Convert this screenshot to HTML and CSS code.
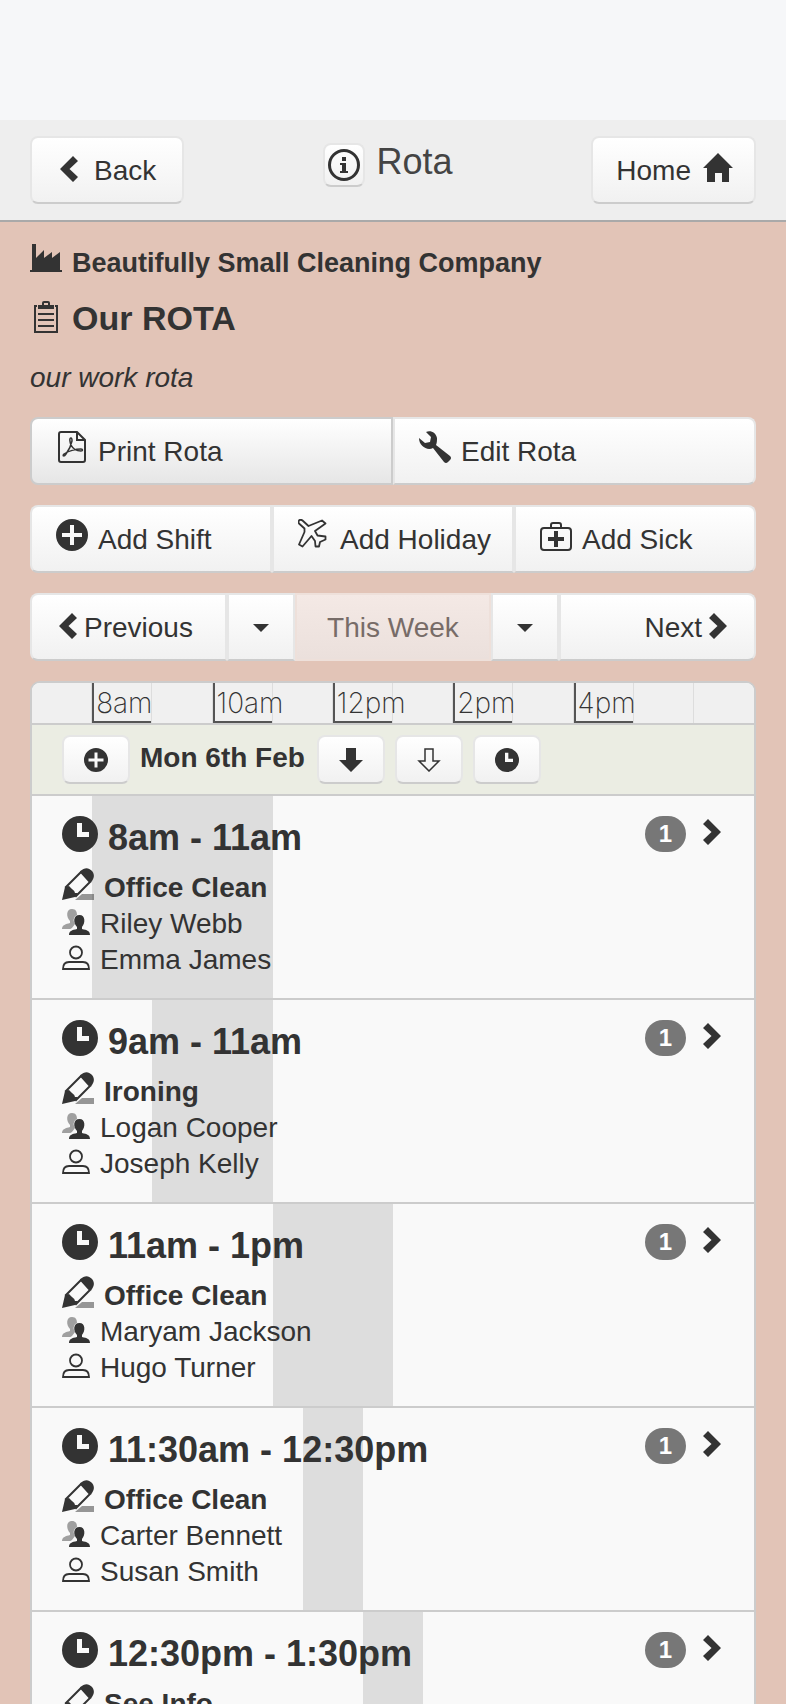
FILE: index.html
```html
<!DOCTYPE html>
<html lang="en">
<head>
<meta charset="utf-8">
<meta name="viewport" content="width=device-width, initial-scale=1">
<title>Rota</title>
<link rel="stylesheet" href="styles.css">
</head>
<body>
<svg class="sprite" aria-hidden="true">
  <symbol id="left" viewBox="0 0 18 26"><path d="M13 0l5 5-8.500 8 8.500 8-5 5L0 13z"/></symbol>
  <symbol id="right" viewBox="0 0 18 26"><path d="M5 0L0 5l8.500 8L0 21l5 5 13-13z"/></symbol>
  <symbol id="info" viewBox="0 0 32 32"><circle cx="16" cy="16" r="14.500" fill="none" stroke="currentColor" stroke-width="3"/><path d="M14 8h4v4h-4zM12 14h6v8h2v2h-8v-2h2v-6h-2z"/></symbol>
  <symbol id="home" viewBox="0 0 30 30"><path d="M15 0l15 15h-4v14h-7v-9h-7v9H4V15H0z"/></symbol>
  <symbol id="factory" viewBox="0 0 32 28"><path d="M2 0h4v14l8-8v8l8-6v6l8-6v18h2v2H0v-2h2z"/></symbol>
  <symbol id="clipboard" viewBox="0 0 32 32"><path d="M5 5v26h22V5M4 5h3M25 5h3" fill="none" stroke="currentColor" stroke-width="2"/><path d="M8 4h4V2q0-2 2-2h4q2 0 2 2v2h4v4H8zM14 2v2h4V2zM8 12h16v2H8zM8 18h16v2H8zM8 24h16v2H8z" fill-rule="evenodd"/></symbol>
  <symbol id="pdf" viewBox="0 0 32 32"><g fill="none" stroke="currentColor" stroke-width="2"><path d="M5 1h16l8 8v20q0 2-2 2H5q-2 0-2-2V3q0-2 2-2M21 1v8h8"/><path d="M15 7c-2 0-1 4 0 7 2 4 6 6 10 6 2 0 2-2 0-2-5 0-13 2-17 5-2 2 0 3 2 0 3-4 5-8 6-13 0-2 0-3-1-3z" stroke-width="1.500"/></g></symbol>
  <symbol id="wrench" viewBox="0 0 32 32"><path d="M7 1c5-2 10 1 11 6 0 2 0 5-1 7l14 11q2 2 0 4l-2 2q-2 2-4 0L14 17c-6 3-14-2-14-10l6 5 5-1 1-5z"/></symbol>
  <symbol id="plus" viewBox="0 0 32 32"><path d="M16 0a16 16 0 1 0 0 32 16 16 0 0 0 0-32zM14 6h4v8h8v4h-8v8h-4v-8H6v-4h8z" fill-rule="evenodd"/></symbol>
  <symbol id="plane" viewBox="0 0 32 32"><path d="M1 1.500Q2.500 0 4.500 1.500l6 5.500L24 1.500l3.500 3L17 12l2.500 4.500 8 1v3L22 23l-1 4.500h-3.500L17 22l-3.500-5-9 10.500-3.500-2 5.500-12.500V9.500L1 4.500Q0 3 1 1.500z" fill="none" stroke="currentColor" stroke-width="1.800" stroke-linejoin="round"/></symbol>
  <symbol id="medkit" viewBox="0 0 32 32"><rect x="1" y="9" width="30" height="22" rx="3" fill="none" stroke="currentColor" stroke-width="2"/><path d="M11 9V6q0-2 2-2h6q2 0 2 2v3" fill="none" stroke="currentColor" stroke-width="2"/><path d="M14 12h4v6h6v4h-6v6h-4v-6H8v-4h6z"/></symbol>
  <symbol id="caret" viewBox="0 0 16 8"><path d="M0 0h16L8 8z"/></symbol>
  <symbol id="down" viewBox="0 0 24 24"><path d="M7 0h10v12h7L12 24 0 12h7z"/></symbol>
  <symbol id="down-open" viewBox="0 0 24 24"><path d="M8 1h8v12h6L12 23 2 13h6z" fill="none" stroke="currentColor" stroke-width="1.500"/></symbol>
  <symbol id="clock" viewBox="0 0 36 36"><path d="M18 0a18 18 0 1 0 0 36 18 18 0 0 0 0-36zM15 7h5v9h7v5H15z" fill-rule="evenodd"/></symbol>
  <symbol id="pen" viewBox="0 0 32 32"><path d="M20 26h12v6H13z" opacity=".5"/><path d="M4 19L19 4l9 10-14 14z" fill="#f9f9f9" stroke="currentColor" stroke-width="2"/><path d="M18 3.500C23-1.500 27 0 29.500 2.500S33.500 9 29 14.500L27 13 20 5.500zM0 32l3-13 4-1 3 3q3 2 3 4h3l-3 4z"/></symbol>
  <symbol id="users" viewBox="0 0 28 28"><path d="M10 1c4 0 5 3 5 6-4 2-4 6-2 9-2 3-4 5-5 5H0c0-4 4-5 8-6V13C4 9 4 1 10 1z" opacity=".45"/><path d="M17.500 7c6 0 6 8 2.500 12v2c5 1 8 2 8 6H7c0-4 3-5 8-6v-2c-4-4-4-12 2.500-12z"/></symbol>
  <symbol id="user" viewBox="0 0 28 28"><g fill="none" stroke="currentColor" stroke-width="1.800"><circle cx="14" cy="8.500" r="6"/><path d="M1 25c0-5 2-7 6-7h14c4 0 6 2 6 7z"/></g></symbol>
</svg>

<div class="app">
  <header class="topbar">
    <a class="btn btn-nav btn-back" href="#back"><svg class="chevron"><use href="#left"/></svg>Back</a>
    <div class="heading">
      <button class="btn btn-info" type="button" aria-label="Information"><svg class="icon-md"><use href="#info"/></svg></button>
      <h1>Rota</h1>
    </div>
    <a class="btn btn-nav btn-home" href="#home">Home<svg class="icon-home"><use href="#home"/></svg></a>
  </header>

  <main class="content">
    <h2 class="company"><svg class="icon-factory"><use href="#factory"/></svg>Beautifully Small Cleaning Company</h2>
    <h2 class="rota-name"><svg class="icon-md"><use href="#clipboard"/></svg>Our ROTA</h2>
    <p class="description">our work rota</p>

    <div class="group">
      <button class="btn btn-action pressed" type="button"><svg class="icon-md"><use href="#pdf"/></svg>Print Rota</button>
      <button class="btn btn-action" type="button"><svg class="icon-md"><use href="#wrench"/></svg>Edit Rota</button>
    </div>
    <div class="group">
      <button class="btn btn-action" type="button"><svg class="icon-md"><use href="#plus"/></svg>Add Shift</button>
      <button class="btn btn-action" type="button"><svg class="icon-md"><use href="#plane"/></svg>Add Holiday</button>
      <button class="btn btn-action" type="button"><svg class="icon-md"><use href="#medkit"/></svg>Add Sick</button>
    </div>
    <div class="group group-weeks">
      <button class="btn btn-prev" type="button"><svg class="chevron"><use href="#left"/></svg>Previous</button>
      <button class="btn" type="button" aria-label="Earlier weeks"><svg class="caret"><use href="#caret"/></svg></button>
      <button class="btn btn-week" type="button" disabled>This Week</button>
      <button class="btn" type="button" aria-label="Later weeks"><svg class="caret"><use href="#caret"/></svg></button>
      <button class="btn btn-next" type="button">Next<svg class="chevron"><use href="#right"/></svg></button>
    </div>

    <section class="schedule">
      <div class="hours">
        <span></span><span class="mark">8am</span><span></span><span class="mark">10am</span><span></span><span class="mark">12pm</span><span></span><span class="mark">2pm</span><span></span><span class="mark">4pm</span><span></span><span></span>
      </div>
      <div class="day">
        <button class="btn btn-small" type="button" aria-label="Add shift on Monday"><svg class="icon-sm"><use href="#plus"/></svg></button>
        <h3>Mon 6th Feb</h3>
        <button class="btn btn-small" type="button" aria-label="Copy down"><svg class="icon-sm"><use href="#down"/></svg></button>
        <button class="btn btn-small" type="button" aria-label="Move down"><svg class="icon-sm"><use href="#down-open"/></svg></button>
        <button class="btn btn-small" type="button" aria-label="Times"><svg class="icon-sm"><use href="#clock"/></svg></button>
      </div>

      <a class="shift" href="#shift-1">
        <span class="span-bar" style="left:8.3333%;width:25%"></span>
        <span class="time"><svg class="icon-lg"><use href="#clock"/></svg><strong>8am - 11am</strong><span class="badge">1</span><svg class="chevron"><use href="#right"/></svg></span>
        <span class="task"><svg class="icon-md"><use href="#pen"/></svg>Office Clean</span>
        <span class="person"><svg class="icon-person"><use href="#users"/></svg>Riley Webb</span>
        <span class="person"><svg class="icon-person"><use href="#user"/></svg>Emma James</span>
      </a>
      <a class="shift" href="#shift-2">
        <span class="span-bar" style="left:16.6667%;width:16.6667%"></span>
        <span class="time"><svg class="icon-lg"><use href="#clock"/></svg><strong>9am - 11am</strong><span class="badge">1</span><svg class="chevron"><use href="#right"/></svg></span>
        <span class="task"><svg class="icon-md"><use href="#pen"/></svg>Ironing</span>
        <span class="person"><svg class="icon-person"><use href="#users"/></svg>Logan Cooper</span>
        <span class="person"><svg class="icon-person"><use href="#user"/></svg>Joseph Kelly</span>
      </a>
      <a class="shift" href="#shift-3">
        <span class="span-bar" style="left:33.3333%;width:16.6667%"></span>
        <span class="time"><svg class="icon-lg"><use href="#clock"/></svg><strong>11am - 1pm</strong><span class="badge">1</span><svg class="chevron"><use href="#right"/></svg></span>
        <span class="task"><svg class="icon-md"><use href="#pen"/></svg>Office Clean</span>
        <span class="person"><svg class="icon-person"><use href="#users"/></svg>Maryam Jackson</span>
        <span class="person"><svg class="icon-person"><use href="#user"/></svg>Hugo Turner</span>
      </a>
      <a class="shift" href="#shift-4">
        <span class="span-bar" style="left:37.5%;width:8.3333%"></span>
        <span class="time"><svg class="icon-lg"><use href="#clock"/></svg><strong>11:30am - 12:30pm</strong><span class="badge">1</span><svg class="chevron"><use href="#right"/></svg></span>
        <span class="task"><svg class="icon-md"><use href="#pen"/></svg>Office Clean</span>
        <span class="person"><svg class="icon-person"><use href="#users"/></svg>Carter Bennett</span>
        <span class="person"><svg class="icon-person"><use href="#user"/></svg>Susan Smith</span>
      </a>
      <a class="shift" href="#shift-5">
        <span class="span-bar" style="left:45.8333%;width:8.3333%"></span>
        <span class="time"><svg class="icon-lg"><use href="#clock"/></svg><strong>12:30pm - 1:30pm</strong><span class="badge">1</span><svg class="chevron"><use href="#right"/></svg></span>
        <span class="task"><svg class="icon-md"><use href="#pen"/></svg>See Info</span>
      </a>
    </section>
  </main>
</div>
</body>
</html>
```
FILE: styles.css
```css
* { box-sizing: border-box; }

body {
  margin: 0;
  font: 28px/36px "Liberation Sans", Arial, sans-serif;
  color: #333;
  background: #e2c4b7;
}

h1, h2, h3, p { margin: 0; }
a { color: inherit; text-decoration: none; }
svg { display: block; flex: none; fill: currentColor; }
.sprite { position: absolute; width: 0; height: 0; }

.app {
  height: 100vh;
  overflow: hidden;
  border-top: 120px solid #f6f7f9;
}

.icon-sm { width: 24px; height: 24px; }
.icon-md { width: 32px; height: 32px; }
.icon-lg { width: 36px; height: 36px; }
.icon-home { width: 30px; height: 30px; }
.icon-factory { width: 32px; height: 28px; }
.icon-person { width: 28px; height: 28px; }
.chevron { width: 18px; height: 26px; }
.caret { width: 16px; height: 8px; }

.btn {
  display: flex;
  align-items: center;
  justify-content: center;
  height: 68px;
  padding: 2px 0 0;
  border: 2px solid #e6e6e6;
  border-bottom-color: #ccc;
  border-radius: 8px;
  background: linear-gradient(#fff, #f1f1f1);
  color: #333;
  font: inherit;
  white-space: nowrap;
}
.btn .chevron { margin-bottom: 4px; }

/* Top bar */
.topbar {
  display: grid;
  grid-template-columns: 1fr auto 1fr;
  align-items: start;
  height: 102px;
  padding: 16px 30px;
  background: #eee;
  border-bottom: 2px solid #a9a9a9;
}
.btn-back { justify-self: start; gap: 16px; padding: 2px 26px 0 28px; }
.btn-home { justify-self: end; gap: 12px; padding: 2px 21px 0 23px; }
.btn-home svg { margin-bottom: 6px; }
.heading {
  display: flex;
  align-items: center;
  gap: 11px;
  padding-right: 10px;
}
.heading h1 {
  color: #444;
  font-size: 36px;
  font-weight: 400;
  line-height: 44px;
}
.btn-info { width: 42px; height: 44px; margin-top: 7px; padding: 0; }

/* Page content */
.content { padding: 21px 30px 0; }
.company, .rota-name {
  display: flex;
  align-items: center;
  gap: 10px;
  font-weight: 700;
  line-height: 40px;
}
.company { margin-bottom: 15px; font-size: 27px; }
.company svg { margin-bottom: 10px; }
.rota-name { margin-bottom: 20px; font-size: 34px; }
.rota-name svg { margin-bottom: 2px; }
.description { margin-bottom: 19px; font-style: italic; line-height: 40px; }

.group { display: grid; grid-auto-flow: column; grid-auto-columns: minmax(0, 1fr); margin-bottom: 20px; }
.group-weeks { grid-template-columns: minmax(0, 1fr) 68px minmax(0, 1fr) 68px minmax(0, 1fr); }
.group .btn { border-radius: 0; }
.group .btn:first-child { border-radius: 8px 0 0 8px; }
.group .btn:last-child { border-radius: 0 8px 8px 0; }
.group .btn-action { justify-content: flex-start; gap: 10px; padding-left: 24px; }
.btn-action svg { margin-bottom: 10px; }
.group .pressed { border-color: #ccc; background: linear-gradient(#fff, #e6e6e6); }
.group .btn-prev { justify-content: flex-start; gap: 7px; padding-left: 27px; }
.group .btn-next { justify-content: flex-end; gap: 7px; padding-right: 27px; }
.group .btn-week {
  border-color: #eee0da;
  background: linear-gradient(#f4e9e5, #ebe0dc);
  color: #776c68;
}

/* Schedule */
.schedule {
  border: 2px solid #ccc;
  border-radius: 10px 10px 0 0;
  background: #f9f9f9;
  overflow: hidden;
}
.hours { display: grid; grid-template-columns: repeat(12, minmax(0, 1fr)); height: 40px; background: #f0f0f0; }
.hours span {
  border-right: 1px solid #ddd;
  font-family: Inter, "Liberation Sans", sans-serif;
  font-weight: 200;
  line-height: 40px;
  white-space: nowrap;
}
.hours span:last-child { border-right: 0; }
.hours .mark {
  padding-left: 2px;
  border-left: 2px solid #555;
  background: linear-gradient(#555, #555) bottom / 100% 2px no-repeat;
}
.day {
  display: flex;
  align-items: center;
  gap: 10px;
  height: 71px;
  padding: 0 30px;
  border-top: 2px solid #ccc;
  background: #ebede3;
}
.day h3 { margin: 0 2px 4px 0; font-size: 28px; line-height: 36px; }
.btn-small { width: 68px; height: 49px; padding: 0; }

.shift {
  position: relative;
  display: flex;
  flex-direction: column;
  padding: 20px 30px;
  border-top: 2px solid #ccc;
}
.span-bar { position: absolute; top: 0; bottom: 0; background: #ddd; }
.time, .task, .person { position: relative; display: flex; align-items: center; }
.time { margin-bottom: 10px; line-height: 44px; }
.time svg { margin-bottom: 8px; }
.time strong {
  flex: 1;
  margin-left: 10px;
  font-size: 36px;
  font-weight: 700;
}
.badge {
  width: 41px;
  margin: 0 17px 8px 0;
  border-radius: 18px;
  background: #777;
  color: #fff;
  font-size: 24px;
  font-weight: 700;
  line-height: 36px;
  text-align: center;
}
.time .chevron { margin: 0 3px 12px 0; }
.task { gap: 10px; height: 36px; font-weight: 700; }
.task svg { margin-bottom: 8px; }
.person { gap: 10px; height: 36px; }
.person svg { margin-bottom: 4px; }
```
